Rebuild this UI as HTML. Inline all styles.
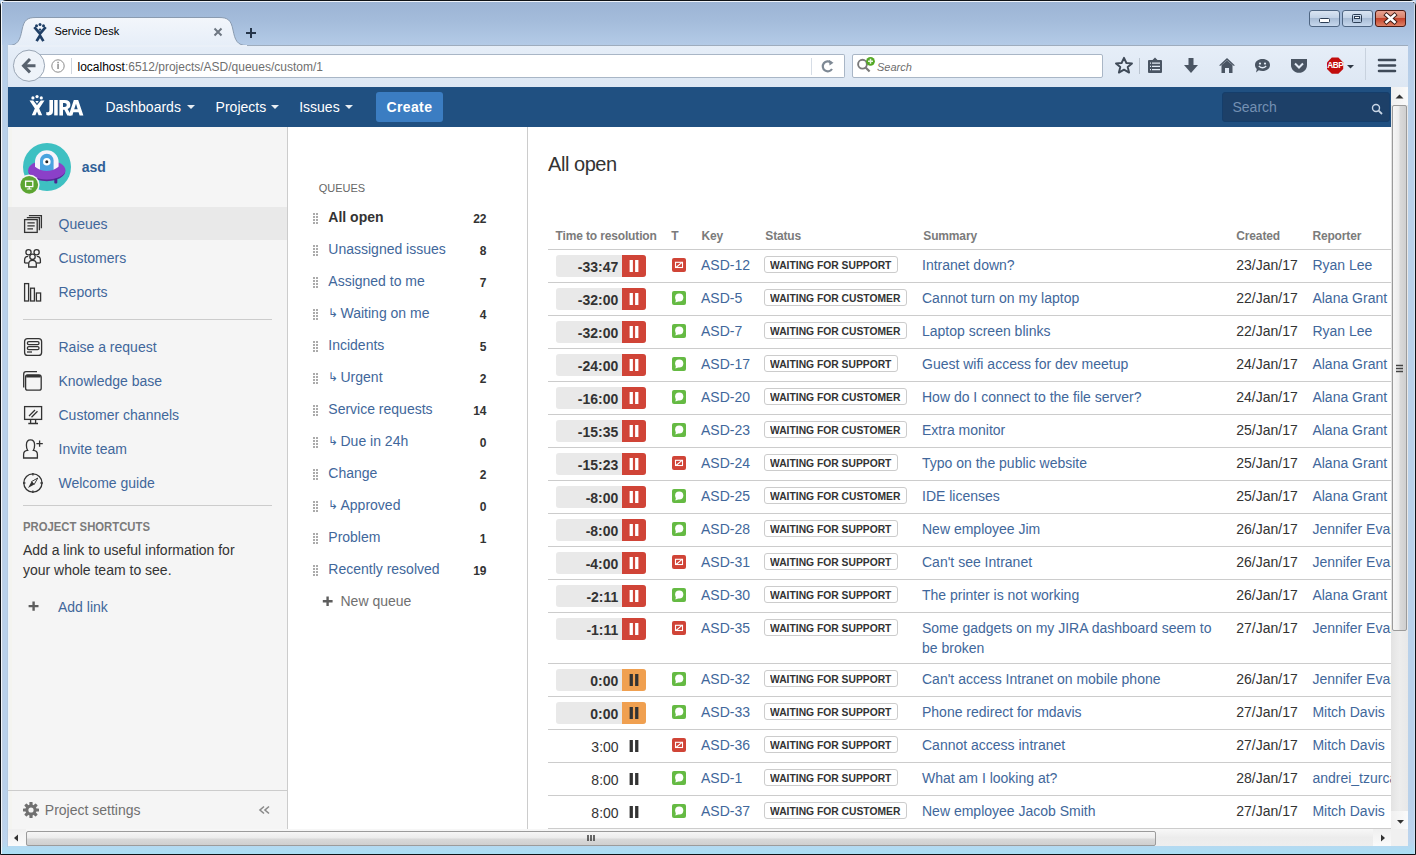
<!DOCTYPE html><html><head><meta charset="utf-8"><title>Service Desk</title><style>
html,body{margin:0;padding:0;width:1416px;height:855px;overflow:hidden;background:#b9d1ea;}
body{position:relative;font-family:"Liberation Sans",sans-serif;}
.t{position:absolute;white-space:nowrap;font-family:"Liberation Sans",sans-serif;}
svg{position:absolute;overflow:visible;}
</style></head><body>
<div style="position:absolute;left:0px;top:0px;width:1416px;height:855px;background:linear-gradient(#9cb4d4 0px,#a4bcdb 20px,#b4cbe7 45px,#b9d1ea 90px,#b9d1ea 800px,#bcd4ee 840px,#a9e0f5 853px);border-radius:6px 6px 0 0;box-sizing:border-box;border:1px solid #0e1216;"></div>
<div style="position:absolute;left:1px;top:1px;width:1414px;height:1px;background:#eef3f9;border-radius:5px 5px 0 0;"></div>
<div style="position:absolute;left:1px;top:1px;width:1px;height:853px;background:linear-gradient(#f4f8fc,#f0f6fb);"></div>
<div style="position:absolute;left:2px;top:45px;width:1px;height:802px;background:#c3d1e1;"></div>
<div style="position:absolute;left:7px;top:45px;width:1px;height:802px;background:#b5cadf;"></div>
<div style="position:absolute;left:1414px;top:1px;width:1px;height:853px;background:linear-gradient(#eef3f9,#d6e4f3);opacity:.6"></div>
<svg style="left:0;top:0" width="1416" height="40">
<defs>
<linearGradient id="wb" x1="0" y1="0" x2="0" y2="1"><stop offset="0" stop-color="#dbe6f3"/><stop offset=".45" stop-color="#c3d3e7"/><stop offset=".5" stop-color="#a9bdd6"/><stop offset="1" stop-color="#c8d9ee"/></linearGradient>
<linearGradient id="wc" x1="0" y1="0" x2="0" y2="1"><stop offset="0" stop-color="#eaa594"/><stop offset=".45" stop-color="#d9826c"/><stop offset=".5" stop-color="#c5432b"/><stop offset="1" stop-color="#e0866a"/></linearGradient>
</defs>
<rect x="1309.5" y="10.5" width="30" height="16" rx="2.5" fill="url(#wb)" stroke="#4e6582" stroke-width="1"/>
<rect x="1342.5" y="10.5" width="30" height="16" rx="2.5" fill="url(#wb)" stroke="#4e6582" stroke-width="1"/>
<rect x="1375.5" y="10.5" width="30" height="16" rx="2.5" fill="url(#wc)" stroke="#4a1a14" stroke-width="1"/>
<rect x="1319.5" y="18.5" width="10" height="4" rx="1" fill="#fff" stroke="#2c3e55" stroke-width="1"/>
<rect x="1352.5" y="14.5" width="9" height="8" rx="1" fill="none" stroke="#2c3e55" stroke-width="1"/>
<rect x="1354.5" y="16.5" width="5" height="2" fill="#fff" stroke="#2c3e55" stroke-width="1"/>
<path d="M1386.5 15 L1394.5 22 M1394.5 15 L1386.5 22" stroke="#3b1a14" stroke-width="4.4" stroke-linecap="square"/>
<path d="M1386.5 15 L1394.5 22 M1394.5 15 L1386.5 22" stroke="#fff" stroke-width="2.6" stroke-linecap="square"/>
</svg>
<svg style="left:0;top:0" width="1416" height="90">
<defs><linearGradient id="tabg" x1="0" y1="0" x2="0" y2="1"><stop offset="0" stop-color="#f3f6fb"/><stop offset="1" stop-color="#e6eef8"/></linearGradient>
<linearGradient id="tb" x1="0" y1="0" x2="0" y2="1"><stop offset="0" stop-color="#e6eef8"/><stop offset="1" stop-color="#dde7f3"/></linearGradient></defs>
<rect x="8" y="45" width="1400" height="42" fill="url(#tb)"/>
<line x1="8" y1="45.5" x2="1408" y2="45.5" stroke="#9eacbd" stroke-width="1"/>
<path d="M8 45.5 C 18 45.5, 20 40, 22 30 C 24 20, 27 17.5, 36 17.5 L 219 17.5 C 228 17.5, 231 20, 233 30 C 235 40, 237 45.5, 247 45.5 Z" fill="url(#tabg)" stroke="#8a9bb0" stroke-width="1"/>
<rect x="8" y="45" width="239" height="2" fill="#eaf0f8"/>
</svg>
<svg style="left:0;top:0" width="60" height="45">
<circle cx="36.5" cy="25.8" r="1.5" fill="#1f3f66"/><circle cx="40" cy="24.6" r="1.5" fill="#1f3f66"/><circle cx="43.5" cy="25.8" r="1.5" fill="#1f3f66"/>
<circle cx="40" cy="29.6" r="1.2" fill="#1f3f66"/>
<path d="M35.2 28.2 L40 33.6 L44.8 28.2 M37.3 40 L40 35.5 L42.7 40" stroke="#1f3f66" stroke-width="2.7" fill="none" stroke-linecap="square"/>
</svg>
<div class="t" style="left:54.4px;top:24.49px;font-size:11px;line-height:14px;color:#000;">Service Desk</div>
<svg style="left:213px;top:27px" width="10" height="10"><path d="M1.5 1.5 L8.5 8.5 M8.5 1.5 L1.5 8.5" stroke="#6e7782" stroke-width="2"/></svg>
<svg style="left:245px;top:27px" width="12" height="12"><path d="M6 1 V11 M1 6 H11" stroke="#25354a" stroke-width="2"/></svg>
<div style="position:absolute;left:29px;top:54px;width:816px;height:24px;background:#fff;box-sizing:border-box;border:1px solid #a9b6c6;border-left:none;border-radius:0 2px 2px 0;"></div>
<div style="position:absolute;left:811px;top:58px;width:1px;height:17px;background:#d6dde6;"></div>
<div style="position:absolute;left:852px;top:54px;width:251px;height:24px;background:#fff;box-sizing:border-box;border:1px solid #a9b6c6;border-radius:2px;"></div>
<svg style="left:0;top:0" width="1416" height="87">
<circle cx="29" cy="65.7" r="15.6" fill="#eef3f9" stroke="#9aa6b5" stroke-width="1"/>
<path d="M30 59 L23.5 65.7 L30 72.4 M24 65.7 H35.5" stroke="#58626e" stroke-width="3" fill="none" stroke-linejoin="miter"/>
<circle cx="58" cy="66" r="6.2" fill="none" stroke="#8c8c8c" stroke-width="1"/>
<rect x="57.3" y="64" width="1.5" height="5" fill="#8c8c8c"/><rect x="57.3" y="61.8" width="1.5" height="1.5" fill="#8c8c8c"/>
<line x1="71.5" y1="58" x2="71.5" y2="74" stroke="#d0d6de"/>
<path d="M831 62.5 A 5 5 0 1 0 832 69" stroke="#7d8894" stroke-width="2.2" fill="none"/>
<path d="M829 60 L833.5 62.8 L829.5 65.5 Z" fill="#7d8894"/>
<circle cx="862.5" cy="64.2" r="4.4" fill="none" stroke="#7a7a7a" stroke-width="1.9"/>
<path d="M865.6 67.4 L869.6 71.6" stroke="#7a7a7a" stroke-width="2.2"/>
<circle cx="870.5" cy="61.3" r="4.4" fill="#54a825"/>
<path d="M870.5 58.8 V63.8 M868 61.3 H873" stroke="#e8f5e0" stroke-width="1.5"/>
</svg>
<div class="t" style="left:77.5px;top:60px;font-size:12px;line-height:15px;color:#000">localhost<span style="color:#6f6f6f">:6512/projects/ASD/queues/custom/1</span></div>
<div class="t" style="left:877px;top:60.29px;font-size:11px;line-height:14px;color:#6d6d6d;font-style:italic;">Search</div>
<svg style="left:0;top:0" width="1416" height="87">
<path d="M1124 57.8 L1126.4 63 L1132 63.4 L1127.7 67 L1129.1 72.6 L1124 69.6 L1118.9 72.6 L1120.3 67 L1116 63.4 L1121.6 63 Z" fill="none" stroke="#3f4a58" stroke-width="1.9" stroke-linejoin="round"/>
<line x1="1139.5" y1="58" x2="1139.5" y2="74" stroke="#b9c3cf"/>
<path d="M1149 60 H1152.5 L1155 57.5 L1157.5 60 H1161 Q1162 60 1162 61 V72 Q1162 73 1161 73 H1149 Q1148 73 1148 72 V61 Q1148 60 1149 60 Z" fill="#4a5563"/>
<path d="M1152 63.2 H1160 M1152 66.4 H1160 M1152 69.6 H1160" stroke="#e4ecf6" stroke-width="1.3"/>
<path d="M1150 63.2 H1151 M1150 66.4 H1151 M1150 69.6 H1151" stroke="#e4ecf6" stroke-width="1.3"/>
<path d="M1188.5 58 H1193.5 V65 H1198 L1191 73 L1184 65 H1188.5 Z" fill="#4a5563"/>
<path d="M1219 65.5 L1227 58 L1235 65.5 L1233.5 65.8 L1227 60.2 L1220.5 65.8 Z" fill="#4a5563"/>
<path d="M1221.5 65 L1227 60.5 L1232.5 65 V73 H1229 V68 H1225 V73 H1221.5 Z" fill="#4a5563"/>
<path d="M1262.5 59 C 1266.8 59, 1270 61.5, 1270 65 C 1270 68.5, 1266.8 71, 1262.5 71 C 1261 71, 1259.8 70.7, 1258.8 70.2 L 1256 72.6 L 1256.8 69 C 1255.6 67.9, 1255 66.5, 1255 65 C 1255 61.5, 1258.2 59, 1262.5 59 Z" fill="#4a5563"/>
<circle cx="1260" cy="63.6" r="1.1" fill="#e4ecf6"/><circle cx="1265" cy="63.6" r="1.1" fill="#e4ecf6"/>
<path d="M1258.8 66 Q1262.5 69.5 1266.2 66" stroke="#e4ecf6" stroke-width="1.4" fill="none"/>
<path d="M1291 59 H1307 V65 C 1307 69.5, 1303.5 72.8, 1299 72.8 C 1294.5 72.8, 1291 69.5, 1291 65 Z" fill="#4a5563"/>
<path d="M1295 63.5 L1299 67.5 L1303 63.5" stroke="#e4ecf6" stroke-width="2" fill="none"/>
<path d="M1331.8 57.6 H1338.4 L1343.2 62.4 V69 L1338.4 73.8 H1331.8 L1327 69 V62.4 Z" fill="#c20d0d"/>
<path d="M1347 65 H1354 L1350.5 68.5 Z" fill="#2f3945"/>
<line x1="1365.5" y1="48" x2="1365.5" y2="80" stroke="#c8d2de"/>
<path d="M1379 60 H1395 M1379 65.5 H1395 M1379 71 H1395" stroke="#3f4a58" stroke-width="2.6" stroke-linecap="round"/>
</svg>
<div class="t" style="left:1327.3px;top:60.5px;font-size:8.2px;line-height:10px;color:#fff;font-weight:bold;letter-spacing:-0.4px">ABP</div>
<div style="position:absolute;left:8px;top:87px;width:1383px;height:742px;background:#fff;"></div>
<div style="position:absolute;left:8px;top:87px;width:1383px;height:40px;background:#205081;"></div>
<svg style="left:28px;top:94px" width="58" height="24" viewBox="28 94 58 24">
<circle cx="32.9" cy="97.9" r="1.6" fill="#fff"/><circle cx="37.05" cy="96.6" r="1.6" fill="#fff"/><circle cx="41.3" cy="97.9" r="1.6" fill="#fff"/>
<path d="M29.5 100.4 H33.2 L37 105.2 L40.8 100.4 H44.5 L39.2 108.6 L42.2 115.3 H38.6 L37 111.6 L35.4 115.3 H31.8 L34.8 108.6 Z" fill="#fff"/><path d="M35.3 101 H38.7 L37 103.6 Z" fill="#fff"/>
<path d="M49.4 100 H53 V111 Q53 115.4 48.6 115.4 Q47 115.4 46.3 115 V112 Q47 112.3 48 112.3 Q49.4 112.3 49.4 110.5 Z" fill="#fff"/>
<rect x="54.2" y="100" width="3.5" height="15.4" fill="#fff"/>
<path d="M59.4 100 H64.6 Q70.4 100 70.4 104.7 Q70.4 107.9 67.6 109 L71.2 115.4 H67.3 L64.4 109.7 H63 V115.4 H59.4 Z M63 103 V106.9 H64.4 Q66.8 106.9 66.8 104.9 Q66.8 103 64.4 103 Z" fill="#fff" fill-rule="evenodd"/>
<path d="M73.8 100 H78.2 L83.4 115.4 H79.6 L78.6 112.3 H73.3 L72.4 115.4 H68.7 Z M74.2 109.3 H77.7 L76 103.8 Z" fill="#fff" fill-rule="evenodd"/>
</svg>
<div class="t" style="left:105.4px;top:97.95px;font-size:14px;line-height:18px;color:#fff;">Dashboards</div>
<svg style="left:187.2px;top:105px" width="8" height="4"><path d="M0 0 H8 L4 4 Z" fill="#fff" opacity=".9"/></svg>
<div class="t" style="left:215.6px;top:97.95px;font-size:14px;line-height:18px;color:#fff;">Projects</div>
<svg style="left:271.3px;top:105px" width="8" height="4"><path d="M0 0 H8 L4 4 Z" fill="#fff" opacity=".9"/></svg>
<div class="t" style="left:299.2px;top:97.95px;font-size:14px;line-height:18px;color:#fff;">Issues</div>
<svg style="left:344.5px;top:105px" width="8" height="4"><path d="M0 0 H8 L4 4 Z" fill="#fff" opacity=".9"/></svg>
<div style="position:absolute;left:376px;top:92px;width:67px;height:30px;background:#3b7dc2;border-radius:3px;"></div>
<div class="t" style="left:386.4px;top:98.15px;font-size:14px;line-height:18px;color:#fff;font-weight:bold;letter-spacing:0.4px;">Create</div>
<div style="position:absolute;left:1222px;top:92px;width:168px;height:30px;background:#1d4068;border:1px solid #153e6b;box-sizing:border-box;border-radius:3px;"></div>
<div class="t" style="left:1232.5px;top:97.85px;font-size:14px;line-height:18px;color:#7490b3;">Search</div>
<svg style="left:1370px;top:102px" width="14" height="14"><circle cx="6" cy="6" r="3.5" fill="none" stroke="#c9d6e6" stroke-width="1.4"/><path d="M8.6 8.6 L12 12" stroke="#c9d6e6" stroke-width="1.8"/></svg>
<div style="position:absolute;left:8px;top:127px;width:279px;height:702px;background:#f5f5f5;"></div>
<div style="position:absolute;left:287px;top:127px;width:1px;height:702px;background:#cccccc;"></div>
<div style="position:absolute;left:8px;top:127px;width:1px;height:702px;background:#ecf5fa;"></div>
<div style="position:absolute;left:9px;top:127px;width:3px;height:702px;background:#f4f4f0;"></div>
<svg style="left:18px;top:138px" width="60" height="60" viewBox="18 138 60 60">
<circle cx="47" cy="167" r="24" fill="#3ec0c2"/>
<ellipse cx="46.8" cy="170.5" rx="18.7" ry="10.2" fill="#8b40c8"/>
<path d="M28.4 171.5 Q30 180 46.8 181.2 Q63.6 180 65.2 171.5 Q63 178 46.8 179 Q30.6 178 28.4 171.5 Z" fill="#5a2a9a"/>
<rect x="54.3" y="178.5" width="3" height="5" rx="1" fill="#4b2390"/>
<path d="M35 171 V162 A11.8 11.8 0 0 1 58.6 162 V171 Z" fill="#f7f3fb"/>
<path d="M40 172 V160.6 A6.8 6.8 0 0 1 53.6 160.6 V172 Z" fill="#4aa3df"/>
<path d="M34.6 166.5 Q46.8 175.5 59 166.5 L65.2 170.5 Q62 179 46.8 179.5 Q31.6 179 28.4 170.5 Z" fill="#8b40c8"/>
<circle cx="46.8" cy="161.7" r="3.8" fill="#fff"/><circle cx="46.8" cy="161.7" r="1.5" fill="#222"/>
<circle cx="29.2" cy="184.8" r="10.4" fill="#f5f5f5"/>
<circle cx="29.2" cy="184.8" r="8.9" fill="#5ca532"/>
<rect x="25.6" y="181.2" width="7.2" height="5.4" fill="none" stroke="#fff" stroke-width="1.3"/>
<path d="M29.2 186.6 V188.6 M26.8 189 H31.6" stroke="#fff" stroke-width="1.2"/>
</svg>
<div class="t" style="left:81.8px;top:157.75px;font-size:14px;line-height:18px;color:#2f5f97;font-weight:bold;">asd</div>
<div style="position:absolute;left:8px;top:207px;width:279px;height:33px;background:#e9e9e9;"></div>
<svg style="left:0;top:0" width="288" height="829">
<g fill="none" stroke="#333" stroke-width="1.3">
<rect x="24.6" y="219.6" width="12.6" height="12.8"/>
<path d="M26.8 217.6 H39.4 V230.2"/>
<path d="M28.9 215.6 H41.4 V228.2"/>
<path d="M27.4 222.8 H34.7 M27.4 225.8 H34.7 M27.4 228.8 H33"/>
<circle cx="28.5" cy="252.2" r="2.6"/><circle cx="36.6" cy="252.2" r="2.6"/><circle cx="32.5" cy="256.8" r="2.7"/>
<path d="M24.6 263 V260 Q24.6 256.3 28.2 256.3"/><path d="M40.4 263 V260 Q40.4 256.3 36.8 256.3"/>
<path d="M24.6 263 H28.7"/><path d="M36.3 263 H40.4"/>
<path d="M28.7 267 V264 Q28.7 260.4 32.5 260.4 Q36.3 260.4 36.3 264 V267 Z"/>
<rect x="24.6" y="283.6" width="4" height="17.4"/>
<rect x="30.6" y="288.2" width="3.8" height="12.8"/>
<rect x="36.4" y="293" width="4.2" height="8"/>
<rect x="24.6" y="338.6" width="17" height="16.8" rx="3"/>
<rect x="27.4" y="341.6" width="11.6" height="3" rx="1.4"/>
<rect x="27.4" y="346.6" width="11.6" height="3" rx="1.4"/>
<path d="M27 352 H32"/>
<path d="M37 371.6 H26 Q23.7 371.6 23.7 374 V387.5"/>
<path d="M26.2 376.2 H40.6" stroke-width="2.6"/>
<path d="M38.8 374.8 H27.6 Q25.6 374.8 25.6 376.8 V388.2 Q25.6 390.2 27.6 390.2 H39.2 Q41.2 390.2 41.2 388.2 V377.2 Q41.2 374.8 38.8 374.8 Z"/>
<rect x="24.6" y="406.6" width="17" height="12.8"/>
<path d="M29 416 L35 410 M31.5 417.3 L37.5 411.3"/>
<path d="M30.6 419.6 V423 M35.6 419.6 V423 M28.3 423.5 H38"/>
<path d="M23.6 458 V454.4 Q23.6 450.6 27.6 450.4 Q26.4 448.6 26.4 445 Q26.4 439.8 30.5 439.8 Q34.6 439.8 34.6 445 Q34.6 448.6 33.4 450.4 Q37.4 450.6 37.4 454.4 V458 Z"/>
<path d="M39.6 440.4 V446.8 M36.4 443.6 H42.8"/>
<circle cx="32.9" cy="483" r="9.1"/>
<path d="M32.9 473 V475.4 M32.9 490.6 V493 M23 483 H25.4 M40.4 483 H42.8"/>
</g>
<path d="M37.8 478 L34.2 484.4 L28 488 L31.6 481.6 Z" fill="#333"/>
<path d="M37.8 478 L31.6 481.6 L34.2 484.4 Z" fill="#f5f5f5" stroke="#333" stroke-width="0.9"/>
<rect x="23" y="319" width="249" height="1" fill="#cccccc"/>
<rect x="23" y="505" width="249" height="1" fill="#cccccc"/>
<rect x="8" y="790" width="279" height="1" fill="#cccccc"/>
<path d="M33.6 601.4 V610.8 M28.6 606.1 H38.5" stroke="#5e5e5e" stroke-width="2.4"/>
</svg>
<div class="t" style="left:58.5px;top:215.35px;font-size:14px;line-height:18px;color:#41679b;">Queues</div>
<div class="t" style="left:58.5px;top:249.35px;font-size:14px;line-height:18px;color:#41679b;">Customers</div>
<div class="t" style="left:58.5px;top:283.35px;font-size:14px;line-height:18px;color:#41679b;">Reports</div>
<div class="t" style="left:58.5px;top:337.75px;font-size:14px;line-height:18px;color:#41679b;">Raise a request</div>
<div class="t" style="left:58.5px;top:371.75px;font-size:14px;line-height:18px;color:#41679b;">Knowledge base</div>
<div class="t" style="left:58.5px;top:405.75px;font-size:14px;line-height:18px;color:#41679b;">Customer channels</div>
<div class="t" style="left:58.5px;top:439.75px;font-size:14px;line-height:18px;color:#41679b;">Invite team</div>
<div class="t" style="left:58.5px;top:473.75px;font-size:14px;line-height:18px;color:#41679b;">Welcome guide</div>
<div class="t" style="left:23.4px;top:520.04px;font-size:12px;line-height:15px;color:#7b7b7b;font-weight:bold;transform:scaleX(0.943);transform-origin:0 0;">PROJECT SHORTCUTS</div>
<div class="t" style="left:22.9px;top:541.15px;font-size:14px;line-height:18px;color:#333;">Add a link to useful information for</div>
<div class="t" style="left:22.9px;top:561.15px;font-size:14px;line-height:18px;color:#333;">your whole team to see.</div>
<div class="t" style="left:58px;top:598.05px;font-size:14px;line-height:18px;color:#41679b;">Add link</div>
<svg style="left:22px;top:801px" width="18" height="18" viewBox="0 0 18 18">
<g transform="translate(9,9)" fill="#707070">
<circle r="5.6"/>
<rect x="-1.6" y="-8" width="3.2" height="16" rx=".6"/>
<rect x="-1.6" y="-8" width="3.2" height="16" rx=".6" transform="rotate(45)"/>
<rect x="-1.6" y="-8" width="3.2" height="16" rx=".6" transform="rotate(90)"/>
<rect x="-1.6" y="-8" width="3.2" height="16" rx=".6" transform="rotate(135)"/>
</g><circle cx="9" cy="9" r="2.6" fill="#f5f5f5"/></svg>
<div class="t" style="left:44.8px;top:800.95px;font-size:14px;line-height:18px;color:#707070;">Project settings</div>
<svg style="left:258px;top:805px" width="14" height="10"><path d="M6 1.5 L2 5 L6 8.5 M11 1.5 L7 5 L11 8.5" fill="none" stroke="#8a8a8a" stroke-width="1.6"/></svg>
<div style="position:absolute;left:527px;top:127px;width:1px;height:702px;background:#cccccc;"></div>
<div class="t" style="left:318.7px;top:181.29px;font-size:11px;line-height:14px;color:#666;">QUEUES</div>
<div class="t" style="left:328.3px;top:208.05px;font-size:14px;line-height:18px;color:#333;font-weight:bold;">All open</div>
<div class="t" style="right:929.5px;top:211.54px;font-size:12px;line-height:15px;color:#333;font-weight:bold;">22</div>
<div class="t" style="left:328.3px;top:240.05px;font-size:14px;line-height:18px;color:#41679b;">Unassigned issues</div>
<div class="t" style="right:929.5px;top:243.54px;font-size:12px;line-height:15px;color:#333;font-weight:bold;">8</div>
<div class="t" style="left:328.3px;top:272.05px;font-size:14px;line-height:18px;color:#41679b;">Assigned to me</div>
<div class="t" style="right:929.5px;top:275.54px;font-size:12px;line-height:15px;color:#333;font-weight:bold;">7</div>
<div class="t" style="left:328.3px;top:306.24px;font-size:12px;line-height:15px;color:#41679b;">↳</div>
<div class="t" style="left:340.5px;top:304.05px;font-size:14px;line-height:18px;color:#41679b;">Waiting on me</div>
<div class="t" style="right:929.5px;top:307.54px;font-size:12px;line-height:15px;color:#333;font-weight:bold;">4</div>
<div class="t" style="left:328.3px;top:336.05px;font-size:14px;line-height:18px;color:#41679b;">Incidents</div>
<div class="t" style="right:929.5px;top:339.54px;font-size:12px;line-height:15px;color:#333;font-weight:bold;">5</div>
<div class="t" style="left:328.3px;top:370.24px;font-size:12px;line-height:15px;color:#41679b;">↳</div>
<div class="t" style="left:340.5px;top:368.05px;font-size:14px;line-height:18px;color:#41679b;">Urgent</div>
<div class="t" style="right:929.5px;top:371.54px;font-size:12px;line-height:15px;color:#333;font-weight:bold;">2</div>
<div class="t" style="left:328.3px;top:400.05px;font-size:14px;line-height:18px;color:#41679b;">Service requests</div>
<div class="t" style="right:929.5px;top:403.54px;font-size:12px;line-height:15px;color:#333;font-weight:bold;">14</div>
<div class="t" style="left:328.3px;top:434.24px;font-size:12px;line-height:15px;color:#41679b;">↳</div>
<div class="t" style="left:340.5px;top:432.05px;font-size:14px;line-height:18px;color:#41679b;">Due in 24h</div>
<div class="t" style="right:929.5px;top:435.54px;font-size:12px;line-height:15px;color:#333;font-weight:bold;">0</div>
<div class="t" style="left:328.3px;top:464.05px;font-size:14px;line-height:18px;color:#41679b;">Change</div>
<div class="t" style="right:929.5px;top:467.54px;font-size:12px;line-height:15px;color:#333;font-weight:bold;">2</div>
<div class="t" style="left:328.3px;top:498.24px;font-size:12px;line-height:15px;color:#41679b;">↳</div>
<div class="t" style="left:340.5px;top:496.05px;font-size:14px;line-height:18px;color:#41679b;">Approved</div>
<div class="t" style="right:929.5px;top:499.54px;font-size:12px;line-height:15px;color:#333;font-weight:bold;">0</div>
<div class="t" style="left:328.3px;top:528.05px;font-size:14px;line-height:18px;color:#41679b;">Problem</div>
<div class="t" style="right:929.5px;top:531.54px;font-size:12px;line-height:15px;color:#333;font-weight:bold;">1</div>
<div class="t" style="left:328.3px;top:560.05px;font-size:14px;line-height:18px;color:#41679b;">Recently resolved</div>
<div class="t" style="right:929.5px;top:563.54px;font-size:12px;line-height:15px;color:#333;font-weight:bold;">19</div>
<svg style="left:0;top:0" width="528" height="829"><g fill="#ababab"><rect x="313" y="213" width="2" height="2"/><rect x="316" y="213" width="2" height="2"/><rect x="313" y="216" width="2" height="2"/><rect x="316" y="216" width="2" height="2"/><rect x="313" y="219" width="2" height="2"/><rect x="316" y="219" width="2" height="2"/><rect x="313" y="222" width="2" height="2"/><rect x="316" y="222" width="2" height="2"/><rect x="313" y="245" width="2" height="2"/><rect x="316" y="245" width="2" height="2"/><rect x="313" y="248" width="2" height="2"/><rect x="316" y="248" width="2" height="2"/><rect x="313" y="251" width="2" height="2"/><rect x="316" y="251" width="2" height="2"/><rect x="313" y="254" width="2" height="2"/><rect x="316" y="254" width="2" height="2"/><rect x="313" y="277" width="2" height="2"/><rect x="316" y="277" width="2" height="2"/><rect x="313" y="280" width="2" height="2"/><rect x="316" y="280" width="2" height="2"/><rect x="313" y="283" width="2" height="2"/><rect x="316" y="283" width="2" height="2"/><rect x="313" y="286" width="2" height="2"/><rect x="316" y="286" width="2" height="2"/><rect x="313" y="309" width="2" height="2"/><rect x="316" y="309" width="2" height="2"/><rect x="313" y="312" width="2" height="2"/><rect x="316" y="312" width="2" height="2"/><rect x="313" y="315" width="2" height="2"/><rect x="316" y="315" width="2" height="2"/><rect x="313" y="318" width="2" height="2"/><rect x="316" y="318" width="2" height="2"/><rect x="313" y="341" width="2" height="2"/><rect x="316" y="341" width="2" height="2"/><rect x="313" y="344" width="2" height="2"/><rect x="316" y="344" width="2" height="2"/><rect x="313" y="347" width="2" height="2"/><rect x="316" y="347" width="2" height="2"/><rect x="313" y="350" width="2" height="2"/><rect x="316" y="350" width="2" height="2"/><rect x="313" y="373" width="2" height="2"/><rect x="316" y="373" width="2" height="2"/><rect x="313" y="376" width="2" height="2"/><rect x="316" y="376" width="2" height="2"/><rect x="313" y="379" width="2" height="2"/><rect x="316" y="379" width="2" height="2"/><rect x="313" y="382" width="2" height="2"/><rect x="316" y="382" width="2" height="2"/><rect x="313" y="405" width="2" height="2"/><rect x="316" y="405" width="2" height="2"/><rect x="313" y="408" width="2" height="2"/><rect x="316" y="408" width="2" height="2"/><rect x="313" y="411" width="2" height="2"/><rect x="316" y="411" width="2" height="2"/><rect x="313" y="414" width="2" height="2"/><rect x="316" y="414" width="2" height="2"/><rect x="313" y="437" width="2" height="2"/><rect x="316" y="437" width="2" height="2"/><rect x="313" y="440" width="2" height="2"/><rect x="316" y="440" width="2" height="2"/><rect x="313" y="443" width="2" height="2"/><rect x="316" y="443" width="2" height="2"/><rect x="313" y="446" width="2" height="2"/><rect x="316" y="446" width="2" height="2"/><rect x="313" y="469" width="2" height="2"/><rect x="316" y="469" width="2" height="2"/><rect x="313" y="472" width="2" height="2"/><rect x="316" y="472" width="2" height="2"/><rect x="313" y="475" width="2" height="2"/><rect x="316" y="475" width="2" height="2"/><rect x="313" y="478" width="2" height="2"/><rect x="316" y="478" width="2" height="2"/><rect x="313" y="501" width="2" height="2"/><rect x="316" y="501" width="2" height="2"/><rect x="313" y="504" width="2" height="2"/><rect x="316" y="504" width="2" height="2"/><rect x="313" y="507" width="2" height="2"/><rect x="316" y="507" width="2" height="2"/><rect x="313" y="510" width="2" height="2"/><rect x="316" y="510" width="2" height="2"/><rect x="313" y="533" width="2" height="2"/><rect x="316" y="533" width="2" height="2"/><rect x="313" y="536" width="2" height="2"/><rect x="316" y="536" width="2" height="2"/><rect x="313" y="539" width="2" height="2"/><rect x="316" y="539" width="2" height="2"/><rect x="313" y="542" width="2" height="2"/><rect x="316" y="542" width="2" height="2"/><rect x="313" y="565" width="2" height="2"/><rect x="316" y="565" width="2" height="2"/><rect x="313" y="568" width="2" height="2"/><rect x="316" y="568" width="2" height="2"/><rect x="313" y="571" width="2" height="2"/><rect x="316" y="571" width="2" height="2"/><rect x="313" y="574" width="2" height="2"/><rect x="316" y="574" width="2" height="2"/></g><path d="M327.6 596.6 V606 M322.8 601.3 H332.6" stroke="#5e5e5e" stroke-width="2.4"/></svg>
<div class="t" style="left:340.5px;top:592.05px;font-size:14px;line-height:18px;color:#707070;">New queue</div>
<div class="t" style="left:548px;top:151.77px;font-size:20px;line-height:25px;color:#333;letter-spacing:-0.45px;">All open</div>
<div class="t" style="left:555.6px;top:228.74px;font-size:12px;line-height:15px;color:#7b7b7b;font-weight:bold;letter-spacing:-0.15px;">Time to resolution</div>
<div class="t" style="left:671.2px;top:228.74px;font-size:12px;line-height:15px;color:#7b7b7b;font-weight:bold;letter-spacing:-0.15px;">T</div>
<div class="t" style="left:701.5px;top:228.74px;font-size:12px;line-height:15px;color:#7b7b7b;font-weight:bold;letter-spacing:-0.15px;">Key</div>
<div class="t" style="left:765.3px;top:228.74px;font-size:12px;line-height:15px;color:#7b7b7b;font-weight:bold;letter-spacing:-0.15px;">Status</div>
<div class="t" style="left:923.3px;top:228.74px;font-size:12px;line-height:15px;color:#7b7b7b;font-weight:bold;letter-spacing:-0.15px;">Summary</div>
<div class="t" style="left:1236.3px;top:228.74px;font-size:12px;line-height:15px;color:#7b7b7b;font-weight:bold;letter-spacing:-0.15px;">Created</div>
<div class="t" style="left:1312.4px;top:228.74px;font-size:12px;line-height:15px;color:#7b7b7b;font-weight:bold;letter-spacing:-0.15px;">Reporter</div>
<div style="position:absolute;left:0;top:0;width:1391px;height:829px;overflow:hidden">
<div style="position:absolute;left:556px;top:255px;width:90px;height:22px;background:#e9e9e9;border-radius:3px;"></div>
<div style="position:absolute;left:622px;top:255px;width:24px;height:22px;background:#d04437;border-radius:0 3px 3px 0;"></div>
<div class="t" style="right:772.7px;top:257.85px;font-size:14px;line-height:18px;color:#333;font-weight:bold;">-33:47</div>
<div class="t" style="left:701px;top:256.35px;font-size:14px;line-height:18px;color:#41679b;">ASD-12</div>
<div style="position:absolute;left:764px;top:256px;width:134px;height:17px;box-sizing:border-box;border:1px solid #cccccc;border-radius:3px;background:#fff;"></div>
<div class="t" style="left:770.3px;top:257.99px;font-size:11px;line-height:14px;color:#333;font-weight:bold;transform:scaleX(0.937);transform-origin:0 0;">WAITING FOR SUPPORT</div>
<div class="t" style="left:922px;top:256.35px;font-size:14px;line-height:18px;color:#41679b;">Intranet down?</div>
<div class="t" style="left:1236.3px;top:256.35px;font-size:14px;line-height:18px;color:#333;">23/Jan/17</div>
<div class="t" style="left:1312.4px;top:256.35px;font-size:14px;line-height:18px;color:#41679b;">Ryan Lee</div>
<div style="position:absolute;left:556px;top:288px;width:90px;height:22px;background:#e9e9e9;border-radius:3px;"></div>
<div style="position:absolute;left:622px;top:288px;width:24px;height:22px;background:#d04437;border-radius:0 3px 3px 0;"></div>
<div class="t" style="right:772.7px;top:290.85px;font-size:14px;line-height:18px;color:#333;font-weight:bold;">-32:00</div>
<div class="t" style="left:701px;top:289.35px;font-size:14px;line-height:18px;color:#41679b;">ASD-5</div>
<div style="position:absolute;left:764px;top:289px;width:143px;height:17px;box-sizing:border-box;border:1px solid #cccccc;border-radius:3px;background:#fff;"></div>
<div class="t" style="left:770.3px;top:290.99px;font-size:11px;line-height:14px;color:#333;font-weight:bold;transform:scaleX(0.937);transform-origin:0 0;">WAITING FOR CUSTOMER</div>
<div class="t" style="left:922px;top:289.35px;font-size:14px;line-height:18px;color:#41679b;">Cannot turn on my laptop</div>
<div class="t" style="left:1236.3px;top:289.35px;font-size:14px;line-height:18px;color:#333;">22/Jan/17</div>
<div class="t" style="left:1312.4px;top:289.35px;font-size:14px;line-height:18px;color:#41679b;">Alana Grant</div>
<div style="position:absolute;left:556px;top:321px;width:90px;height:22px;background:#e9e9e9;border-radius:3px;"></div>
<div style="position:absolute;left:622px;top:321px;width:24px;height:22px;background:#d04437;border-radius:0 3px 3px 0;"></div>
<div class="t" style="right:772.7px;top:323.85px;font-size:14px;line-height:18px;color:#333;font-weight:bold;">-32:00</div>
<div class="t" style="left:701px;top:322.35px;font-size:14px;line-height:18px;color:#41679b;">ASD-7</div>
<div style="position:absolute;left:764px;top:322px;width:143px;height:17px;box-sizing:border-box;border:1px solid #cccccc;border-radius:3px;background:#fff;"></div>
<div class="t" style="left:770.3px;top:323.99px;font-size:11px;line-height:14px;color:#333;font-weight:bold;transform:scaleX(0.937);transform-origin:0 0;">WAITING FOR CUSTOMER</div>
<div class="t" style="left:922px;top:322.35px;font-size:14px;line-height:18px;color:#41679b;">Laptop screen blinks</div>
<div class="t" style="left:1236.3px;top:322.35px;font-size:14px;line-height:18px;color:#333;">22/Jan/17</div>
<div class="t" style="left:1312.4px;top:322.35px;font-size:14px;line-height:18px;color:#41679b;">Ryan Lee</div>
<div style="position:absolute;left:556px;top:354px;width:90px;height:22px;background:#e9e9e9;border-radius:3px;"></div>
<div style="position:absolute;left:622px;top:354px;width:24px;height:22px;background:#d04437;border-radius:0 3px 3px 0;"></div>
<div class="t" style="right:772.7px;top:356.85px;font-size:14px;line-height:18px;color:#333;font-weight:bold;">-24:00</div>
<div class="t" style="left:701px;top:355.35px;font-size:14px;line-height:18px;color:#41679b;">ASD-17</div>
<div style="position:absolute;left:764px;top:355px;width:134px;height:17px;box-sizing:border-box;border:1px solid #cccccc;border-radius:3px;background:#fff;"></div>
<div class="t" style="left:770.3px;top:356.99px;font-size:11px;line-height:14px;color:#333;font-weight:bold;transform:scaleX(0.937);transform-origin:0 0;">WAITING FOR SUPPORT</div>
<div class="t" style="left:922px;top:355.35px;font-size:14px;line-height:18px;color:#41679b;">Guest wifi access for dev meetup</div>
<div class="t" style="left:1236.3px;top:355.35px;font-size:14px;line-height:18px;color:#333;">24/Jan/17</div>
<div class="t" style="left:1312.4px;top:355.35px;font-size:14px;line-height:18px;color:#41679b;">Alana Grant</div>
<div style="position:absolute;left:556px;top:387px;width:90px;height:22px;background:#e9e9e9;border-radius:3px;"></div>
<div style="position:absolute;left:622px;top:387px;width:24px;height:22px;background:#d04437;border-radius:0 3px 3px 0;"></div>
<div class="t" style="right:772.7px;top:389.85px;font-size:14px;line-height:18px;color:#333;font-weight:bold;">-16:00</div>
<div class="t" style="left:701px;top:388.35px;font-size:14px;line-height:18px;color:#41679b;">ASD-20</div>
<div style="position:absolute;left:764px;top:388px;width:143px;height:17px;box-sizing:border-box;border:1px solid #cccccc;border-radius:3px;background:#fff;"></div>
<div class="t" style="left:770.3px;top:389.99px;font-size:11px;line-height:14px;color:#333;font-weight:bold;transform:scaleX(0.937);transform-origin:0 0;">WAITING FOR CUSTOMER</div>
<div class="t" style="left:922px;top:388.35px;font-size:14px;line-height:18px;color:#41679b;">How do I connect to the file server?</div>
<div class="t" style="left:1236.3px;top:388.35px;font-size:14px;line-height:18px;color:#333;">24/Jan/17</div>
<div class="t" style="left:1312.4px;top:388.35px;font-size:14px;line-height:18px;color:#41679b;">Alana Grant</div>
<div style="position:absolute;left:556px;top:420px;width:90px;height:22px;background:#e9e9e9;border-radius:3px;"></div>
<div style="position:absolute;left:622px;top:420px;width:24px;height:22px;background:#d04437;border-radius:0 3px 3px 0;"></div>
<div class="t" style="right:772.7px;top:422.85px;font-size:14px;line-height:18px;color:#333;font-weight:bold;">-15:35</div>
<div class="t" style="left:701px;top:421.35px;font-size:14px;line-height:18px;color:#41679b;">ASD-23</div>
<div style="position:absolute;left:764px;top:421px;width:143px;height:17px;box-sizing:border-box;border:1px solid #cccccc;border-radius:3px;background:#fff;"></div>
<div class="t" style="left:770.3px;top:422.99px;font-size:11px;line-height:14px;color:#333;font-weight:bold;transform:scaleX(0.937);transform-origin:0 0;">WAITING FOR CUSTOMER</div>
<div class="t" style="left:922px;top:421.35px;font-size:14px;line-height:18px;color:#41679b;">Extra monitor</div>
<div class="t" style="left:1236.3px;top:421.35px;font-size:14px;line-height:18px;color:#333;">25/Jan/17</div>
<div class="t" style="left:1312.4px;top:421.35px;font-size:14px;line-height:18px;color:#41679b;">Alana Grant</div>
<div style="position:absolute;left:556px;top:453px;width:90px;height:22px;background:#e9e9e9;border-radius:3px;"></div>
<div style="position:absolute;left:622px;top:453px;width:24px;height:22px;background:#d04437;border-radius:0 3px 3px 0;"></div>
<div class="t" style="right:772.7px;top:455.85px;font-size:14px;line-height:18px;color:#333;font-weight:bold;">-15:23</div>
<div class="t" style="left:701px;top:454.35px;font-size:14px;line-height:18px;color:#41679b;">ASD-24</div>
<div style="position:absolute;left:764px;top:454px;width:134px;height:17px;box-sizing:border-box;border:1px solid #cccccc;border-radius:3px;background:#fff;"></div>
<div class="t" style="left:770.3px;top:455.99px;font-size:11px;line-height:14px;color:#333;font-weight:bold;transform:scaleX(0.937);transform-origin:0 0;">WAITING FOR SUPPORT</div>
<div class="t" style="left:922px;top:454.35px;font-size:14px;line-height:18px;color:#41679b;">Typo on the public website</div>
<div class="t" style="left:1236.3px;top:454.35px;font-size:14px;line-height:18px;color:#333;">25/Jan/17</div>
<div class="t" style="left:1312.4px;top:454.35px;font-size:14px;line-height:18px;color:#41679b;">Alana Grant</div>
<div style="position:absolute;left:556px;top:486px;width:90px;height:22px;background:#e9e9e9;border-radius:3px;"></div>
<div style="position:absolute;left:622px;top:486px;width:24px;height:22px;background:#d04437;border-radius:0 3px 3px 0;"></div>
<div class="t" style="right:772.7px;top:488.85px;font-size:14px;line-height:18px;color:#333;font-weight:bold;">-8:00</div>
<div class="t" style="left:701px;top:487.35px;font-size:14px;line-height:18px;color:#41679b;">ASD-25</div>
<div style="position:absolute;left:764px;top:487px;width:143px;height:17px;box-sizing:border-box;border:1px solid #cccccc;border-radius:3px;background:#fff;"></div>
<div class="t" style="left:770.3px;top:488.99px;font-size:11px;line-height:14px;color:#333;font-weight:bold;transform:scaleX(0.937);transform-origin:0 0;">WAITING FOR CUSTOMER</div>
<div class="t" style="left:922px;top:487.35px;font-size:14px;line-height:18px;color:#41679b;">IDE licenses</div>
<div class="t" style="left:1236.3px;top:487.35px;font-size:14px;line-height:18px;color:#333;">25/Jan/17</div>
<div class="t" style="left:1312.4px;top:487.35px;font-size:14px;line-height:18px;color:#41679b;">Alana Grant</div>
<div style="position:absolute;left:556px;top:519px;width:90px;height:22px;background:#e9e9e9;border-radius:3px;"></div>
<div style="position:absolute;left:622px;top:519px;width:24px;height:22px;background:#d04437;border-radius:0 3px 3px 0;"></div>
<div class="t" style="right:772.7px;top:521.85px;font-size:14px;line-height:18px;color:#333;font-weight:bold;">-8:00</div>
<div class="t" style="left:701px;top:520.35px;font-size:14px;line-height:18px;color:#41679b;">ASD-28</div>
<div style="position:absolute;left:764px;top:520px;width:134px;height:17px;box-sizing:border-box;border:1px solid #cccccc;border-radius:3px;background:#fff;"></div>
<div class="t" style="left:770.3px;top:521.99px;font-size:11px;line-height:14px;color:#333;font-weight:bold;transform:scaleX(0.937);transform-origin:0 0;">WAITING FOR SUPPORT</div>
<div class="t" style="left:922px;top:520.35px;font-size:14px;line-height:18px;color:#41679b;">New employee Jim</div>
<div class="t" style="left:1236.3px;top:520.35px;font-size:14px;line-height:18px;color:#333;">26/Jan/17</div>
<div class="t" style="left:1312.4px;top:520.35px;font-size:14px;line-height:18px;color:#41679b;">Jennifer Evans</div>
<div style="position:absolute;left:556px;top:552px;width:90px;height:22px;background:#e9e9e9;border-radius:3px;"></div>
<div style="position:absolute;left:622px;top:552px;width:24px;height:22px;background:#d04437;border-radius:0 3px 3px 0;"></div>
<div class="t" style="right:772.7px;top:554.85px;font-size:14px;line-height:18px;color:#333;font-weight:bold;">-4:00</div>
<div class="t" style="left:701px;top:553.35px;font-size:14px;line-height:18px;color:#41679b;">ASD-31</div>
<div style="position:absolute;left:764px;top:553px;width:134px;height:17px;box-sizing:border-box;border:1px solid #cccccc;border-radius:3px;background:#fff;"></div>
<div class="t" style="left:770.3px;top:554.99px;font-size:11px;line-height:14px;color:#333;font-weight:bold;transform:scaleX(0.937);transform-origin:0 0;">WAITING FOR SUPPORT</div>
<div class="t" style="left:922px;top:553.35px;font-size:14px;line-height:18px;color:#41679b;">Can't see Intranet</div>
<div class="t" style="left:1236.3px;top:553.35px;font-size:14px;line-height:18px;color:#333;">26/Jan/17</div>
<div class="t" style="left:1312.4px;top:553.35px;font-size:14px;line-height:18px;color:#41679b;">Jennifer Evans</div>
<div style="position:absolute;left:556px;top:585px;width:90px;height:22px;background:#e9e9e9;border-radius:3px;"></div>
<div style="position:absolute;left:622px;top:585px;width:24px;height:22px;background:#d04437;border-radius:0 3px 3px 0;"></div>
<div class="t" style="right:772.7px;top:587.85px;font-size:14px;line-height:18px;color:#333;font-weight:bold;">-2:11</div>
<div class="t" style="left:701px;top:586.35px;font-size:14px;line-height:18px;color:#41679b;">ASD-30</div>
<div style="position:absolute;left:764px;top:586px;width:134px;height:17px;box-sizing:border-box;border:1px solid #cccccc;border-radius:3px;background:#fff;"></div>
<div class="t" style="left:770.3px;top:587.99px;font-size:11px;line-height:14px;color:#333;font-weight:bold;transform:scaleX(0.937);transform-origin:0 0;">WAITING FOR SUPPORT</div>
<div class="t" style="left:922px;top:586.35px;font-size:14px;line-height:18px;color:#41679b;">The printer is not working</div>
<div class="t" style="left:1236.3px;top:586.35px;font-size:14px;line-height:18px;color:#333;">26/Jan/17</div>
<div class="t" style="left:1312.4px;top:586.35px;font-size:14px;line-height:18px;color:#41679b;">Alana Grant</div>
<div style="position:absolute;left:556px;top:618px;width:90px;height:22px;background:#e9e9e9;border-radius:3px;"></div>
<div style="position:absolute;left:622px;top:618px;width:24px;height:22px;background:#d04437;border-radius:0 3px 3px 0;"></div>
<div class="t" style="right:772.7px;top:620.85px;font-size:14px;line-height:18px;color:#333;font-weight:bold;">-1:11</div>
<div class="t" style="left:701px;top:619.35px;font-size:14px;line-height:18px;color:#41679b;">ASD-35</div>
<div style="position:absolute;left:764px;top:619px;width:134px;height:17px;box-sizing:border-box;border:1px solid #cccccc;border-radius:3px;background:#fff;"></div>
<div class="t" style="left:770.3px;top:620.99px;font-size:11px;line-height:14px;color:#333;font-weight:bold;transform:scaleX(0.937);transform-origin:0 0;">WAITING FOR SUPPORT</div>
<div class="t" style="left:922px;top:619.35px;font-size:14px;line-height:18px;color:#41679b;">Some gadgets on my JIRA dashboard seem to</div>
<div class="t" style="left:922px;top:639.35px;font-size:14px;line-height:18px;color:#41679b;">be broken</div>
<div class="t" style="left:1236.3px;top:619.35px;font-size:14px;line-height:18px;color:#333;">27/Jan/17</div>
<div class="t" style="left:1312.4px;top:619.35px;font-size:14px;line-height:18px;color:#41679b;">Jennifer Evans</div>
<div style="position:absolute;left:556px;top:669px;width:90px;height:22px;background:#e9e9e9;border-radius:3px;"></div>
<div style="position:absolute;left:622px;top:669px;width:24px;height:22px;background:#f0a050;border-radius:0 3px 3px 0;"></div>
<div class="t" style="right:772.7px;top:671.85px;font-size:14px;line-height:18px;color:#333;font-weight:bold;">0:00</div>
<div class="t" style="left:701px;top:670.35px;font-size:14px;line-height:18px;color:#41679b;">ASD-32</div>
<div style="position:absolute;left:764px;top:670px;width:134px;height:17px;box-sizing:border-box;border:1px solid #cccccc;border-radius:3px;background:#fff;"></div>
<div class="t" style="left:770.3px;top:671.99px;font-size:11px;line-height:14px;color:#333;font-weight:bold;transform:scaleX(0.937);transform-origin:0 0;">WAITING FOR SUPPORT</div>
<div class="t" style="left:922px;top:670.35px;font-size:14px;line-height:18px;color:#41679b;">Can't access Intranet on mobile phone</div>
<div class="t" style="left:1236.3px;top:670.35px;font-size:14px;line-height:18px;color:#333;">26/Jan/17</div>
<div class="t" style="left:1312.4px;top:670.35px;font-size:14px;line-height:18px;color:#41679b;">Jennifer Evans</div>
<div style="position:absolute;left:556px;top:702px;width:90px;height:22px;background:#e9e9e9;border-radius:3px;"></div>
<div style="position:absolute;left:622px;top:702px;width:24px;height:22px;background:#f0a050;border-radius:0 3px 3px 0;"></div>
<div class="t" style="right:772.7px;top:704.85px;font-size:14px;line-height:18px;color:#333;font-weight:bold;">0:00</div>
<div class="t" style="left:701px;top:703.35px;font-size:14px;line-height:18px;color:#41679b;">ASD-33</div>
<div style="position:absolute;left:764px;top:703px;width:134px;height:17px;box-sizing:border-box;border:1px solid #cccccc;border-radius:3px;background:#fff;"></div>
<div class="t" style="left:770.3px;top:704.99px;font-size:11px;line-height:14px;color:#333;font-weight:bold;transform:scaleX(0.937);transform-origin:0 0;">WAITING FOR SUPPORT</div>
<div class="t" style="left:922px;top:703.35px;font-size:14px;line-height:18px;color:#41679b;">Phone redirect for mdavis</div>
<div class="t" style="left:1236.3px;top:703.35px;font-size:14px;line-height:18px;color:#333;">27/Jan/17</div>
<div class="t" style="left:1312.4px;top:703.35px;font-size:14px;line-height:18px;color:#41679b;">Mitch Davis</div>
<div class="t" style="right:772.4px;top:737.85px;font-size:14px;line-height:18px;color:#333;">3:00</div>
<div class="t" style="left:701px;top:736.35px;font-size:14px;line-height:18px;color:#41679b;">ASD-36</div>
<div style="position:absolute;left:764px;top:736px;width:134px;height:17px;box-sizing:border-box;border:1px solid #cccccc;border-radius:3px;background:#fff;"></div>
<div class="t" style="left:770.3px;top:737.99px;font-size:11px;line-height:14px;color:#333;font-weight:bold;transform:scaleX(0.937);transform-origin:0 0;">WAITING FOR SUPPORT</div>
<div class="t" style="left:922px;top:736.35px;font-size:14px;line-height:18px;color:#41679b;">Cannot access intranet</div>
<div class="t" style="left:1236.3px;top:736.35px;font-size:14px;line-height:18px;color:#333;">27/Jan/17</div>
<div class="t" style="left:1312.4px;top:736.35px;font-size:14px;line-height:18px;color:#41679b;">Mitch Davis</div>
<div class="t" style="right:772.4px;top:770.85px;font-size:14px;line-height:18px;color:#333;">8:00</div>
<div class="t" style="left:701px;top:769.35px;font-size:14px;line-height:18px;color:#41679b;">ASD-1</div>
<div style="position:absolute;left:764px;top:769px;width:134px;height:17px;box-sizing:border-box;border:1px solid #cccccc;border-radius:3px;background:#fff;"></div>
<div class="t" style="left:770.3px;top:770.99px;font-size:11px;line-height:14px;color:#333;font-weight:bold;transform:scaleX(0.937);transform-origin:0 0;">WAITING FOR SUPPORT</div>
<div class="t" style="left:922px;top:769.35px;font-size:14px;line-height:18px;color:#41679b;">What am I looking at?</div>
<div class="t" style="left:1236.3px;top:769.35px;font-size:14px;line-height:18px;color:#333;">28/Jan/17</div>
<div class="t" style="left:1312.4px;top:769.35px;font-size:14px;line-height:18px;color:#41679b;">andrei_tzurcanu</div>
<div class="t" style="right:772.4px;top:803.85px;font-size:14px;line-height:18px;color:#333;">8:00</div>
<div class="t" style="left:701px;top:802.35px;font-size:14px;line-height:18px;color:#41679b;">ASD-37</div>
<div style="position:absolute;left:764px;top:802px;width:143px;height:17px;box-sizing:border-box;border:1px solid #cccccc;border-radius:3px;background:#fff;"></div>
<div class="t" style="left:770.3px;top:803.99px;font-size:11px;line-height:14px;color:#333;font-weight:bold;transform:scaleX(0.937);transform-origin:0 0;">WAITING FOR CUSTOMER</div>
<div class="t" style="left:922px;top:802.35px;font-size:14px;line-height:18px;color:#41679b;">New employee Jacob Smith</div>
<div class="t" style="left:1236.3px;top:802.35px;font-size:14px;line-height:18px;color:#333;">27/Jan/17</div>
<div class="t" style="left:1312.4px;top:802.35px;font-size:14px;line-height:18px;color:#41679b;">Mitch Davis</div>
</div>
<svg style="left:0;top:0" width="1416" height="855"><rect x="548" y="249" width="843" height="1" fill="#cccccc"/><rect x="629.6" y="260" width="3.3" height="12" fill="#fff"/><rect x="635.1" y="260" width="3.3" height="12" fill="#fff"/><rect x="672" y="258" width="14" height="14" rx="2" fill="#d04437"/><rect x="675.5" y="262.3" width="7" height="5.2" fill="none" stroke="#fff" stroke-width="1.1"/><path d="M676 267.5 L682 262.3" stroke="#fff" stroke-width="1.1"/><rect x="548" y="282" width="843" height="1" fill="#cccccc"/><rect x="629.6" y="293" width="3.3" height="12" fill="#fff"/><rect x="635.1" y="293" width="3.3" height="12" fill="#fff"/><rect x="672" y="291" width="14" height="14" rx="2" fill="#65ba43"/><circle cx="679.2" cy="297.5" r="4.1" fill="#fff"/><path d="M676 299.6 L675.4 302.4 L678.6 301.2 Z" fill="#fff"/><rect x="548" y="315" width="843" height="1" fill="#cccccc"/><rect x="629.6" y="326" width="3.3" height="12" fill="#fff"/><rect x="635.1" y="326" width="3.3" height="12" fill="#fff"/><rect x="672" y="324" width="14" height="14" rx="2" fill="#65ba43"/><circle cx="679.2" cy="330.5" r="4.1" fill="#fff"/><path d="M676 332.6 L675.4 335.4 L678.6 334.2 Z" fill="#fff"/><rect x="548" y="348" width="843" height="1" fill="#cccccc"/><rect x="629.6" y="359" width="3.3" height="12" fill="#fff"/><rect x="635.1" y="359" width="3.3" height="12" fill="#fff"/><rect x="672" y="357" width="14" height="14" rx="2" fill="#65ba43"/><circle cx="679.2" cy="363.5" r="4.1" fill="#fff"/><path d="M676 365.6 L675.4 368.4 L678.6 367.2 Z" fill="#fff"/><rect x="548" y="381" width="843" height="1" fill="#cccccc"/><rect x="629.6" y="392" width="3.3" height="12" fill="#fff"/><rect x="635.1" y="392" width="3.3" height="12" fill="#fff"/><rect x="672" y="390" width="14" height="14" rx="2" fill="#65ba43"/><circle cx="679.2" cy="396.5" r="4.1" fill="#fff"/><path d="M676 398.6 L675.4 401.4 L678.6 400.2 Z" fill="#fff"/><rect x="548" y="414" width="843" height="1" fill="#cccccc"/><rect x="629.6" y="425" width="3.3" height="12" fill="#fff"/><rect x="635.1" y="425" width="3.3" height="12" fill="#fff"/><rect x="672" y="423" width="14" height="14" rx="2" fill="#65ba43"/><circle cx="679.2" cy="429.5" r="4.1" fill="#fff"/><path d="M676 431.6 L675.4 434.4 L678.6 433.2 Z" fill="#fff"/><rect x="548" y="447" width="843" height="1" fill="#cccccc"/><rect x="629.6" y="458" width="3.3" height="12" fill="#fff"/><rect x="635.1" y="458" width="3.3" height="12" fill="#fff"/><rect x="672" y="456" width="14" height="14" rx="2" fill="#d04437"/><rect x="675.5" y="460.3" width="7" height="5.2" fill="none" stroke="#fff" stroke-width="1.1"/><path d="M676 465.5 L682 460.3" stroke="#fff" stroke-width="1.1"/><rect x="548" y="480" width="843" height="1" fill="#cccccc"/><rect x="629.6" y="491" width="3.3" height="12" fill="#fff"/><rect x="635.1" y="491" width="3.3" height="12" fill="#fff"/><rect x="672" y="489" width="14" height="14" rx="2" fill="#65ba43"/><circle cx="679.2" cy="495.5" r="4.1" fill="#fff"/><path d="M676 497.6 L675.4 500.4 L678.6 499.2 Z" fill="#fff"/><rect x="548" y="513" width="843" height="1" fill="#cccccc"/><rect x="629.6" y="524" width="3.3" height="12" fill="#fff"/><rect x="635.1" y="524" width="3.3" height="12" fill="#fff"/><rect x="672" y="522" width="14" height="14" rx="2" fill="#65ba43"/><circle cx="679.2" cy="528.5" r="4.1" fill="#fff"/><path d="M676 530.6 L675.4 533.4 L678.6 532.2 Z" fill="#fff"/><rect x="548" y="546" width="843" height="1" fill="#cccccc"/><rect x="629.6" y="557" width="3.3" height="12" fill="#fff"/><rect x="635.1" y="557" width="3.3" height="12" fill="#fff"/><rect x="672" y="555" width="14" height="14" rx="2" fill="#d04437"/><rect x="675.5" y="559.3" width="7" height="5.2" fill="none" stroke="#fff" stroke-width="1.1"/><path d="M676 564.5 L682 559.3" stroke="#fff" stroke-width="1.1"/><rect x="548" y="579" width="843" height="1" fill="#cccccc"/><rect x="629.6" y="590" width="3.3" height="12" fill="#fff"/><rect x="635.1" y="590" width="3.3" height="12" fill="#fff"/><rect x="672" y="588" width="14" height="14" rx="2" fill="#65ba43"/><circle cx="679.2" cy="594.5" r="4.1" fill="#fff"/><path d="M676 596.6 L675.4 599.4 L678.6 598.2 Z" fill="#fff"/><rect x="548" y="612" width="843" height="1" fill="#cccccc"/><rect x="629.6" y="623" width="3.3" height="12" fill="#fff"/><rect x="635.1" y="623" width="3.3" height="12" fill="#fff"/><rect x="672" y="621" width="14" height="14" rx="2" fill="#d04437"/><rect x="675.5" y="625.3" width="7" height="5.2" fill="none" stroke="#fff" stroke-width="1.1"/><path d="M676 630.5 L682 625.3" stroke="#fff" stroke-width="1.1"/><rect x="548" y="663" width="843" height="1" fill="#cccccc"/><rect x="629.6" y="674" width="3.3" height="12" fill="#333"/><rect x="635.1" y="674" width="3.3" height="12" fill="#333"/><rect x="672" y="672" width="14" height="14" rx="2" fill="#65ba43"/><circle cx="679.2" cy="678.5" r="4.1" fill="#fff"/><path d="M676 680.6 L675.4 683.4 L678.6 682.2 Z" fill="#fff"/><rect x="548" y="696" width="843" height="1" fill="#cccccc"/><rect x="629.6" y="707" width="3.3" height="12" fill="#333"/><rect x="635.1" y="707" width="3.3" height="12" fill="#333"/><rect x="672" y="705" width="14" height="14" rx="2" fill="#65ba43"/><circle cx="679.2" cy="711.5" r="4.1" fill="#fff"/><path d="M676 713.6 L675.4 716.4 L678.6 715.2 Z" fill="#fff"/><rect x="548" y="729" width="843" height="1" fill="#cccccc"/><rect x="629.6" y="740" width="3.3" height="12" fill="#333"/><rect x="635.1" y="740" width="3.3" height="12" fill="#333"/><rect x="672" y="738" width="14" height="14" rx="2" fill="#d04437"/><rect x="675.5" y="742.3" width="7" height="5.2" fill="none" stroke="#fff" stroke-width="1.1"/><path d="M676 747.5 L682 742.3" stroke="#fff" stroke-width="1.1"/><rect x="548" y="762" width="843" height="1" fill="#cccccc"/><rect x="629.6" y="773" width="3.3" height="12" fill="#333"/><rect x="635.1" y="773" width="3.3" height="12" fill="#333"/><rect x="672" y="771" width="14" height="14" rx="2" fill="#65ba43"/><circle cx="679.2" cy="777.5" r="4.1" fill="#fff"/><path d="M676 779.6 L675.4 782.4 L678.6 781.2 Z" fill="#fff"/><rect x="548" y="795" width="843" height="1" fill="#cccccc"/><rect x="629.6" y="806" width="3.3" height="12" fill="#333"/><rect x="635.1" y="806" width="3.3" height="12" fill="#333"/><rect x="672" y="804" width="14" height="14" rx="2" fill="#65ba43"/><circle cx="679.2" cy="810.5" r="4.1" fill="#fff"/><path d="M676 812.6 L675.4 815.4 L678.6 814.2 Z" fill="#fff"/><rect x="548" y="828" width="843" height="1" fill="#cccccc"/></svg>
<div style="position:absolute;left:1391px;top:87px;width:17px;height:742px;background:linear-gradient(90deg,#e3e3e3,#ededed 50%,#e8e8e8);"></div>
<div style="position:absolute;left:1391px;top:87px;width:17px;height:18px;background:linear-gradient(90deg,#f0f0f0,#fafafa);"></div>
<div style="position:absolute;left:1391px;top:811px;width:17px;height:18px;background:linear-gradient(90deg,#f0f0f0,#fafafa);"></div>
<div style="position:absolute;left:1392px;top:105px;width:15px;height:526px;box-sizing:border-box;border:1px solid #9b9b9b;border-radius:2px;background:linear-gradient(90deg,#f6f6f6,#ececec 45%,#d9d9d9 55%,#cfcfcf);"></div>
<svg style="left:1391px;top:87px" width="17" height="742"><path d="M4.5 11.5 L8.5 7.5 L12.5 11.5 Z" fill="#333"/><path d="M6 733 L9.5 736.8 L13 733 Z" fill="#333"/><path d="M5 278.5 H12 M5 281.5 H12 M5 284.5 H12" stroke="#444" stroke-width="1.4"/></svg>
<div style="position:absolute;left:8px;top:829px;width:1383px;height:17px;background:linear-gradient(#f8f8f8,#ececec 50%,#eeeeee);"></div>
<div style="position:absolute;left:8px;top:829px;width:18px;height:17px;background:linear-gradient(#f0f0f0,#fafafa);"></div>
<div style="position:absolute;left:1373px;top:829px;width:18px;height:17px;background:linear-gradient(#f0f0f0,#fafafa);"></div>
<div style="position:absolute;left:26px;top:831px;width:1130px;height:15px;box-sizing:border-box;border:1px solid #9b9b9b;border-radius:2px;background:linear-gradient(#f6f6f6,#ececec 45%,#d9d9d9 55%,#cfcfcf);"></div>
<svg style="left:8px;top:829px" width="1383" height="17"><path d="M10 5.5 L6 9 L10 12.5 Z" fill="#333"/><path d="M1373 5.5 L1377 9 L1373 12.5 Z" fill="#333"/><path d="M580 6 V12 M583 6 V12 M586 6 V12" stroke="#3a3a3a" stroke-width="1.5"/></svg>
<div style="position:absolute;left:1391px;top:829px;width:17px;height:17px;background:#f0f0f0;"></div>
</body></html>
